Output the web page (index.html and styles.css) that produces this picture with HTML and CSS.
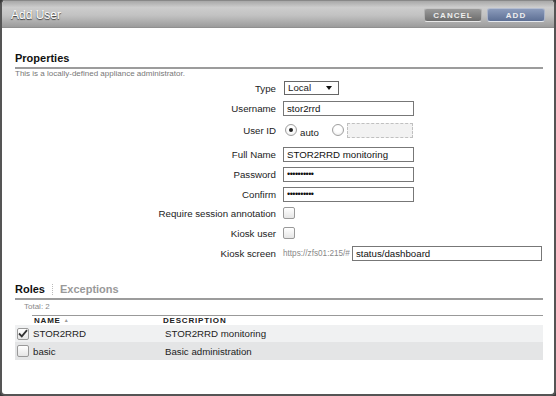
FILE: index.html
```html
<!DOCTYPE html>
<html lang="en">

<head>
    <meta charset="UTF-8">
    <title>Add User</title>
    <link rel="stylesheet" href="styles.css">
</head>

<body>
    <div class="dialog">
        <!-- Title bar -->
        <div class="dialog-header">
            <span class="dialog-title">Add User</span>
            <div class="header-buttons">
                <button class="btn btn-cancel">CANCEL</button>
                <button class="btn btn-add">ADD</button>
            </div>
        </div>

        <div class="dialog-body">
            <!-- Properties -->
            <h2 class="section-title">Properties</h2>
            <p class="section-note">This is a locally-defined appliance administrator.</p>

            <div class="form">
                <div class="row">
                    <label class="label">Type</label>
                    <div class="field">
                        <div class="select">Local<span class="select-arrow"></span></div>
                    </div>
                </div>
                <div class="row">
                    <label class="label">Username</label>
                    <div class="field"><input class="text-input" type="text" value="stor2rrd"></div>
                </div>
                <div class="row row-userid">
                    <label class="label">User ID</label>
                    <div class="field">
                        <span class="radio checked"></span>
                        <span class="radio-text">auto</span>
                        <span class="radio radio-second"></span>
                        <span class="disabled-input"></span>
                    </div>
                </div>
                <div class="row row-fullname">
                    <label class="label">Full Name</label>
                    <div class="field"><input class="text-input" type="text" value="STOR2RRD monitoring"></div>
                </div>
                <div class="row">
                    <label class="label">Password</label>
                    <div class="field"><input class="text-input" type="password" value="stor2rrd12"></div>
                </div>
                <div class="row">
                    <label class="label">Confirm</label>
                    <div class="field"><input class="text-input" type="password" value="stor2rrd12"></div>
                </div>
                <div class="row row-short">
                    <label class="label">Require session annotation</label>
                    <div class="field"><span class="checkbox"></span></div>
                </div>
                <div class="row row-kiosk">
                    <label class="label">Kiosk user</label>
                    <div class="field"><span class="checkbox"></span></div>
                </div>
                <div class="row">
                    <label class="label">Kiosk screen</label>
                    <div class="field">
                        <span class="url-prefix">https://zfs01:215/#</span>
                        <input class="text-input kiosk-input" type="text" value="status/dashboard">
                    </div>
                </div>
            </div>

            <!-- Roles -->
            <div class="tabs">
                <span class="tab active">Roles</span>
                <span class="tab-sep"></span>
                <span class="tab">Exceptions</span>
            </div>
            <div class="total">Total: 2</div>

            <div class="table">
                <div class="table-head">
                    <span class="col-name">NAME <span class="sort">&#9650;</span></span>
                    <span class="col-desc">DESCRIPTION</span>
                </div>
                <div class="table-row odd">
                    <span class="checkbox checked">
                        <svg width="10" height="9" viewBox="0 0 10 9"><path d="M1 4.5 L3.8 7.3 L9 1.2" fill="none" stroke="#333" stroke-width="1.8"/></svg>
                    </span>
                    <span class="cell-name">STOR2RRD</span>
                    <span class="cell-desc">STOR2RRD monitoring</span>
                </div>
                <div class="table-row even">
                    <span class="checkbox"></span>
                    <span class="cell-name">basic</span>
                    <span class="cell-desc">Basic administration</span>
                </div>
            </div>
        </div>
    </div>
</body>

</html>
```

FILE: styles.css
```css
* {
    box-sizing: border-box;
    margin: 0;
    padding: 0;
}

body {
    font-family: "Liberation Sans", Arial, sans-serif;
    font-size: 9.7px;
    color: #222;
    background-color: #3a3a3a;
}

.dialog {
    width: 556px;
    height: 396px;
    background-color: #fff;
    border: 2px solid #555;
    border-top: 1px solid #888;
    border-radius: 5px;
    overflow: hidden;
    display: flex;
    flex-direction: column;
}

.dialog-header {
    height: 27px;
    flex-shrink: 0;
    display: flex;
    align-items: center;
    justify-content: space-between;
    padding: 0 9px 0 9px;
    background: linear-gradient(to bottom, #a8a8a8 0%, #cdcdcd 25%, #c2c2c2 55%, #9c9c9c 100%);
    border-bottom: 1px solid #909090;
}

.dialog-title {
    color: #fff;
    font-size: 12px;
    text-shadow: 0 1px 1px #333;
    margin-top: 1px;
}

.header-buttons {
    display: flex;
    gap: 5px;
    margin-top: 2px;
}

.btn {
    width: 58px;
    height: 14px;
    border: 1px solid #d8d8d8;
    border-radius: 3px;
    font-family: "Liberation Sans", Arial, sans-serif;
    font-size: 8px;
    font-weight: bold;
    letter-spacing: 1px;
    color: #eee;
    cursor: pointer;
}

.btn-cancel {
    background: linear-gradient(to bottom, #9a9a9a, #6c6c6c);
    border-color: #c4c4c4 #b0b0b0 #e8e8e8;
}

.btn-add {
    background: linear-gradient(to bottom, #8b9bbb, #5d6f94);
    border-color: #b4bdd0 #a9b3c8 #e4e8ee;
}

.dialog-body {
    flex: 1;
    padding: 0 11px 0 13px;
}

.section-title {
    font-size: 11px;
    font-weight: bold;
    color: #111;
    margin-top: 24px;
    padding-bottom: 2px;
    border-bottom: 2px solid #9c9c9c;
    line-height: 13px;
}

.section-note {
    font-size: 8px;
    color: #777;
    margin-top: 0;
    line-height: 10px;
}

.form {
    margin-top: -1px;
}

.row {
    display: flex;
    align-items: center;
    height: 20px;
}

.row-userid {
    margin-top: 2px;
}

.row-fullname {
    margin-top: 4px;
}

.row-short {
    height: 16px;
    margin-top: 1px;
}

.row-kiosk {
    margin-top: 2px;
}

.label {
    width: 268px;
    text-align: right;
    padding-right: 7px;
    color: #222;
}

.field {
    display: flex;
    align-items: center;
}

.select {
    position: relative;
    width: 55px;
    height: 14px;
    border: 1px solid #666;
    background-color: #fff;
    padding-left: 3px;
    line-height: 12px;
    margin-left: 1px;
}

.select-arrow {
    position: absolute;
    right: 6px;
    top: 4px;
    border-left: 3px solid transparent;
    border-right: 3px solid transparent;
    border-top: 4px solid #111;
}

.text-input {
    width: 131px;
    height: 15px;
    border: 1px solid #777;
    padding: 0 3px;
    font-family: "Liberation Sans", Arial, sans-serif;
    font-size: 9.7px;
    color: #111;
    outline: none;
}

.text-input[type="password"] {
    font-size: 9px;
    letter-spacing: -0.5px;
}

.radio {
    width: 12px;
    height: 12px;
    border-radius: 50%;
    border: 1px solid #a0a0a0;
    background: radial-gradient(circle at 50% 40%, #fff 40%, #e4e4e4 100%);
    margin-left: 2px;
    position: relative;
}

.radio.checked::after {
    content: "";
    position: absolute;
    left: 3px;
    top: 3px;
    width: 4px;
    height: 4px;
    border-radius: 50%;
    background-color: #222;
}

.radio-text {
    margin-left: 3px;
    margin-top: 4px;
}

.radio-second {
    margin-left: 13px;
}

.disabled-input {
    width: 66px;
    height: 15px;
    margin-left: 3px;
    background-color: #f2f2f2;
    border: 1px dashed #c0c0c0;
}

.checkbox {
    width: 12px;
    height: 12px;
    border: 1px solid #999;
    border-radius: 2px;
    background: linear-gradient(to bottom, #fff, #e6e6e6);
    display: inline-flex;
    align-items: center;
    justify-content: center;
}

.url-prefix {
    font-size: 8.2px;
    color: #888;
    margin-right: 2px;
}

.kiosk-input {
    width: 190px;
}

.tabs {
    display: flex;
    align-items: center;
    margin-top: 20px;
    padding-bottom: 2px;
    border-bottom: 2px solid #9c9c9c;
    line-height: 13px;
}

.tab {
    font-size: 11px;
    font-weight: bold;
    color: #999;
}

.tab.active {
    color: #111;
}

.tab-sep {
    width: 0;
    height: 11px;
    border-left: 1px dotted #bbb;
    margin: 0 7px;
}

.total {
    font-size: 8px;
    color: #888;
    margin-left: 9px;
    margin-top: 2px;
    line-height: 10px;
}

.table {
    margin-top: 3px;
}

.table-head {
    display: flex;
    margin-left: 17px;
    border-top: 1px solid #999;
    height: 10px;
    align-items: center;
    font-size: 8px;
    font-weight: bold;
    letter-spacing: 0.8px;
    color: #222;
}

.col-name {
    width: 131px;
    padding-left: 2px;
}

.sort {
    font-size: 5px;
    color: #999;
    vertical-align: 1px;
}

.table-row {
    display: flex;
    align-items: center;
    height: 17px;
    padding-left: 2px;
}

.table-row.odd {
    background-color: #f0f1f2;
}

.table-row.even {
    background-color: #e4e5e6;
    height: 18px;
}

.cell-name {
    width: 136px;
    padding-left: 4px;
}

.cell-desc {
    color: #222;
}
```
